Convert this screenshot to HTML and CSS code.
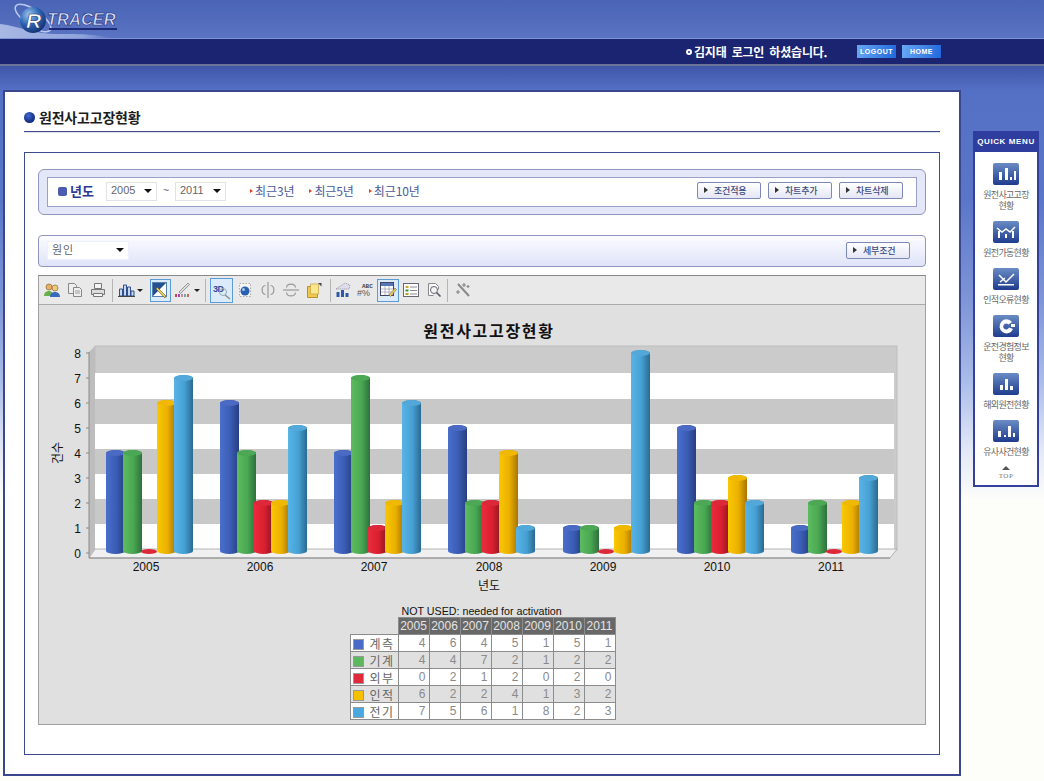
FILE: index.html
```html
<!DOCTYPE html>
<html lang="ko">
<head>
<meta charset="utf-8">
<title>원전사고고장현황</title>
<link rel="stylesheet" href="styles.css">
</head>
<body>
<header class="top">
  <div class="logo-row">
    <svg class="logo" width="130" height="38" viewBox="0 0 130 38">
      <defs>
        <radialGradient id="ball" cx="35%" cy="30%" r="75%"><stop offset="0" stop-color="#9cc6f0"/><stop offset=".55" stop-color="#2a62b0"/><stop offset="1" stop-color="#12306f"/></radialGradient>
        <linearGradient id="haze" x1="0" y1="0" x2="1" y2="0"><stop offset="0" stop-color="#a8b8e4"/><stop offset=".75" stop-color="#8fa4dc"/><stop offset="1" stop-color="#5a73c2"/></linearGradient>
      </defs>
      <path d="M0 24C20 26 30 34 60 34S100 35 110 38H0z" fill="url(#haze)"/>
      <ellipse cx="33" cy="18" rx="21" ry="8" fill="none" stroke="#b8c8ee" stroke-width="1.600" transform="rotate(35 33 18)"/>
      <circle cx="33" cy="20" r="13" fill="url(#ball)"/>
      <text class="logo-r" x="26" y="28">R</text>
      <text class="logo-t" x="47" y="25">TRACER</text>
      <rect x="49" y="28" width="68" height="2" fill="#1c2a78"/>
    </svg>
  </div>
  <div class="nav-row">
    <span class="dot"></span>
    <span class="user">김지태 로그인 하셨습니다.</span>
    <a class="nav-btn">LOGOUT</a>
    <a class="nav-btn">HOME</a>
  </div>
  <div class="nav-shadow"></div>
</header>

<div class="stage">
  <main class="panel">
    <h1 class="title"><span class="title-dot"></span>원전사고고장현황</h1>
    <section class="box">
      <div class="filter">
        <div class="filter-in">
          <span class="sq"></span>
          <strong class="year-label">년도</strong>
          <span class="sel sel-y">2005<i class="tri"></i></span>
          <span class="tilde">~</span>
          <span class="sel sel-y">2011<i class="tri"></i></span>
          <a class="lnk lnk-first">최근3년</a>
          <a class="lnk">최근5년</a>
          <a class="lnk">최근10년</a>
          <span class="btns">
            <a class="btn">조건적용</a>
            <a class="btn">차트추가</a>
            <a class="btn">차트삭제</a>
          </span>
        </div>
      </div>

      <div class="bar2">
        <span class="sel sel-w">원인<i class="tri"></i></span>
        <a class="btn btn-end">세부조건</a>
      </div>

      <div class="chart-panel">
        <div class="toolbar">
          <span class="tb tb-first"><svg width="18" height="16" viewBox="0 0 18 16"><circle cx="6" cy="5" r="3" fill="#e8b060" stroke="#8a6a30" stroke-width=".7"/><circle cx="12" cy="6" r="3" fill="#f0c878" stroke="#8a6a30" stroke-width=".7"/><path d="M1 14c0-4 3-5 5-5s4 1 4 5z" fill="#6ab04a"/><path d="M7 15c0-4 3-5 5-5s5 1 5 5z" fill="#3a6ac0"/></svg></span>
          <span class="tb"><svg width="16" height="16" viewBox="0 0 16 16" fill="#eee" stroke="#888"><path d="M1.500 1.500h6l2 2v8h-8z"/><path d="M6.500 5.500h6l2 2v7h-8z"/><path d="M8 9h5M8 11h5" stroke-width=".8"/></svg></span>
          <span class="tb"><svg width="16" height="16" viewBox="0 0 16 16" fill="#ddd" stroke="#777"><path d="M4.500 1.500h7v5h-7z" fill="#f4f4f4"/><path d="M1.500 7.500h13v5h-13z"/><path d="M3.500 11.500h9v3h-9z" fill="#f4f4f4"/></svg></span>
          <span class="sep sep-a"></span>
          <span class="tb tb-bars"><svg width="17" height="16" viewBox="0 0 17 16" fill="#c9d8ee" stroke="#2f4f8f"><path d="M1.500 14V7h3v7zM5.500 14V3h3v11zM9.500 14V5h3v9zM13 14V9h3v5z"/><path d="M0 14.500h17" stroke="#444"/></svg></span>
          <i class="drop"></i>
          <span class="tb tb-on tb-pointer"><svg width="17" height="17" viewBox="0 0 17 17"><rect x=".5" y=".5" width="14" height="14" fill="#fff" stroke="#5580b0"/><path d="M1 1h13L7 8 1 14z" fill="#24508f"/><path d="M5 5l9 9-1 2-9-9z" fill="#f0d050" stroke="#333" stroke-width=".5"/></svg></span>
          <span class="tb"><svg width="17" height="16" viewBox="0 0 17 16"><path d="M5 10L14 1l1.500 1.500-9 9z" fill="#ddd" stroke="#777" stroke-width=".7"/><path d="M1 12h2v3H1z" fill="#d44"/><path d="M4 12h2v3H4z" fill="#a4c"/><path d="M7 12h2v3H7z" fill="#c8a"/><path d="M10 12h2v3h-2z" fill="#7a9"/><path d="M13 12h2v3h-2z" fill="#c66"/></svg></span>
          <i class="drop"></i>
          <span class="sep sep-b"></span>
          <span class="tb tb-on tb-3d"><svg width="20" height="19" viewBox="0 0 20 19"><text class="ic-3d" x="1" y="11">3D</text><circle cx="11" cy="11" r="3.500" fill="none" stroke="#9aa"/><path d="M13 14l5 4" stroke="#889" stroke-width="1.500"/></svg></span>
          <span class="tb"><svg width="16" height="16" viewBox="0 0 16 16"><rect x="2.500" y="1.500" width="11" height="13" fill="#f4f4f4" stroke="#aaa" stroke-dasharray="1.500 1.500"/><circle cx="8" cy="9" r="4.500" fill="#2a60b0"/><circle cx="6.500" cy="7.500" r="1.500" fill="#a8c8ee"/></svg></span>
          <span class="tb"><svg width="16" height="16" viewBox="0 0 16 16" fill="none" stroke="#999" stroke-width="1.200"><path d="M8 0v16"/><path d="M5.500 3.500C1 4 1 12 5.500 12.500M10.500 3.500c4.500.5 4.500 8.500 0 9"/></svg></span>
          <span class="tb"><svg width="16" height="16" viewBox="0 0 16 16" fill="none" stroke="#999" stroke-width="1.200"><path d="M0 8h16"/><path d="M3.500 5.500C4 1 12 1 12.500 5.500M3.500 10.500c.5 4.500 8.500 4.500 9 0"/></svg></span>
          <span class="tb"><svg width="16" height="16" viewBox="0 0 16 16"><path d="M1.500 4.500h10v11h-10z" fill="#f2c84a" stroke="#b89030"/><path d="M4.500 2h8v10h-8z" fill="#fbe68c" stroke="#c0a040" stroke-width=".7"/><path d="M12 1l3.500 0v3.500z" fill="#445"/></svg></span>
          <span class="sep sep-c"></span>
          <span class="tb"><svg width="16" height="16" viewBox="0 0 16 16"><path d="M1 7L10 1l5 2-1 4H2z" fill="#dde" stroke="#778" stroke-width=".7" stroke-dasharray="1 1"/><path d="M1.500 10h3v5h-3z" fill="#2a5aa8"/><path d="M6 8h3v7H6z" fill="#2a5aa8"/><path d="M10.500 11h3v4h-3z" fill="#2a5aa8"/></svg></span>
          <span class="tb"><svg width="17" height="16" viewBox="0 0 17 16"><text class="ic-abc" x="5" y="6">ABC</text><text class="ic-hash" x="0" y="14">#%</text></svg></span>
          <span class="tb tb-on tb-table"><svg width="17" height="16" viewBox="0 0 17 16"><rect x=".5" y=".5" width="13" height="13" fill="#fff" stroke="#446"/><path d="M1 1h12v3H1z" fill="#5577b8"/><path d="M1 7h12M1 10h12M5 4v9M9 4v9" stroke="#99a" stroke-width=".7"/><path d="M9 13l6-7 1.500 1.500-6 7z" fill="#f0d050" stroke="#555" stroke-width=".5"/></svg></span>
          <span class="tb"><svg width="16" height="16" viewBox="0 0 16 16"><rect x=".5" y="1.500" width="15" height="13" fill="#fff" stroke="#667"/><path d="M2.500 4h3v2h-3z" fill="#d4a420"/><path d="M2.500 7.500h3v2h-3z" fill="#3a8a3a"/><path d="M2.500 11h3v2h-3z" fill="#b8a020"/><path d="M7 5h7M7 8.500h7M7 12h7" stroke="#889"/></svg></span>
          <span class="tb"><svg width="16" height="16" viewBox="0 0 16 16"><path d="M2.500 1.500h7l3 3v3M2.500 1.500v12h5" fill="#fff" stroke="#888"/><circle cx="8" cy="8" r="3.500" fill="#f4f4f4" stroke="#667"/><path d="M10.500 10.500l4 4" stroke="#556" stroke-width="1.600"/></svg></span>
          <span class="sep sep-d"></span>
          <span class="tb"><svg width="16" height="16" viewBox="0 0 16 16" stroke="#888" stroke-width="1.200" fill="none"><path d="M3 2l11 12" stroke-width="2"/><path d="M9 1v4M7 3h4M3 8v4M1 10h4M13 3v3M11.500 4.500h3"/></svg></span>
        </div>

        <svg class="plot" width="886" height="300" viewBox="39 305 886 300">
          <defs>
            <linearGradient id="gb"><stop offset="0" stop-color="#4a6fcc"/><stop offset=".55" stop-color="#3b5cb4"/><stop offset="1" stop-color="#263f80"/></linearGradient>
            <linearGradient id="gg"><stop offset="0" stop-color="#5dbb5f"/><stop offset=".55" stop-color="#4aa852"/><stop offset="1" stop-color="#2d703c"/></linearGradient>
            <linearGradient id="gr"><stop offset="0" stop-color="#ec2a3e"/><stop offset=".55" stop-color="#d8202f"/><stop offset="1" stop-color="#8b1522"/></linearGradient>
            <linearGradient id="gy"><stop offset="0" stop-color="#fac800"/><stop offset=".55" stop-color="#eab000"/><stop offset="1" stop-color="#a87400"/></linearGradient>
            <linearGradient id="gl"><stop offset="0" stop-color="#58b4e6"/><stop offset=".55" stop-color="#46a0d4"/><stop offset="1" stop-color="#2a6a90"/></linearGradient>
          </defs>
          <text class="c-title" x="489" y="337">원전사고고장현황</text>

          <rect class="wall" x="95" y="346" width="802" height="204"/>
          <rect class="w-white" x="95" y="373" width="799" height="176"/>
          <rect class="w-grey" x="95" y="399" width="799" height="25"/>
          <rect class="w-grey" x="95" y="449" width="799" height="25"/>
          <rect class="w-grey" x="95" y="499" width="799" height="25"/>
          <path class="side" d="M89 352l6-6v203l-6 8z"/>
          <path class="floor" d="M95 549H897l-7 9H89z"/>
          <path class="axis" d="M89 352V558H890M86 353h3M86 378h3M86 403h3M86 428h3M86 453h3M86 478h3M86 503h3M86 528h3M86 553h3"/>

          <g class="ticks">
            <text x="81" y="358">8</text><text x="81" y="383">7</text><text x="81" y="408">6</text>
            <text x="81" y="433">5</text><text x="81" y="458">4</text><text x="81" y="483">3</text>
            <text x="81" y="508">2</text><text x="81" y="533">1</text><text x="81" y="558">0</text>
          </g>

          <g fill="url(#gb)">
            <path d="M106 551V453a9.500 3 0 0 1 19 0V551a9.500 3 0 0 1-19 0z"/>
            <path d="M220 551V403a9.500 3 0 0 1 19 0V551a9.500 3 0 0 1-19 0z"/>
            <path d="M334 551V453a9.500 3 0 0 1 19 0V551a9.500 3 0 0 1-19 0z"/>
            <path d="M448 551V428a9.500 3 0 0 1 19 0V551a9.500 3 0 0 1-19 0z"/>
            <path d="M563 551V528a9.500 3 0 0 1 19 0V551a9.500 3 0 0 1-19 0z"/>
            <path d="M677 551V428a9.500 3 0 0 1 19 0V551a9.500 3 0 0 1-19 0z"/>
            <path d="M791 551V528a9.500 3 0 0 1 19 0V551a9.500 3 0 0 1-19 0z"/>
          </g>
          <g class="cap-b">
            <ellipse cx="115.500" cy="453" rx="9.500" ry="3"/><ellipse cx="229.500" cy="403" rx="9.500" ry="3"/><ellipse cx="343.500" cy="453" rx="9.500" ry="3"/><ellipse cx="457.500" cy="428" rx="9.500" ry="3"/><ellipse cx="572.500" cy="528" rx="9.500" ry="3"/><ellipse cx="686.500" cy="428" rx="9.500" ry="3"/><ellipse cx="800.500" cy="528" rx="9.500" ry="3"/>
          </g>
          <g fill="url(#gg)">
            <path d="M123 551V453a9.500 3 0 0 1 19 0V551a9.500 3 0 0 1-19 0z"/>
            <path d="M237 551V453a9.500 3 0 0 1 19 0V551a9.500 3 0 0 1-19 0z"/>
            <path d="M351 551V378a9.500 3 0 0 1 19 0V551a9.500 3 0 0 1-19 0z"/>
            <path d="M465 551V503a9.500 3 0 0 1 19 0V551a9.500 3 0 0 1-19 0z"/>
            <path d="M580 551V528a9.500 3 0 0 1 19 0V551a9.500 3 0 0 1-19 0z"/>
            <path d="M694 551V503a9.500 3 0 0 1 19 0V551a9.500 3 0 0 1-19 0z"/>
            <path d="M808 551V503a9.500 3 0 0 1 19 0V551a9.500 3 0 0 1-19 0z"/>
          </g>
          <g class="cap-g">
            <ellipse cx="132.500" cy="453" rx="9.500" ry="3"/><ellipse cx="246.500" cy="453" rx="9.500" ry="3"/><ellipse cx="360.500" cy="378" rx="9.500" ry="3"/><ellipse cx="474.500" cy="503" rx="9.500" ry="3"/><ellipse cx="589.500" cy="528" rx="9.500" ry="3"/><ellipse cx="703.500" cy="503" rx="9.500" ry="3"/><ellipse cx="817.500" cy="503" rx="9.500" ry="3"/>
          </g>
          <g fill="url(#gr)">
            <path d="M254 551V503a9.500 3 0 0 1 19 0V551a9.500 3 0 0 1-19 0z"/>
            <path d="M368 551V528a9.500 3 0 0 1 19 0V551a9.500 3 0 0 1-19 0z"/>
            <path d="M482 551V503a9.500 3 0 0 1 19 0V551a9.500 3 0 0 1-19 0z"/>
            <path d="M711 551V503a9.500 3 0 0 1 19 0V551a9.500 3 0 0 1-19 0z"/>
          </g>
          <g class="cap-r">
            <ellipse cx="263.500" cy="503" rx="9.500" ry="3"/><ellipse cx="377.500" cy="528" rx="9.500" ry="3"/><ellipse cx="491.500" cy="503" rx="9.500" ry="3"/><ellipse cx="720.500" cy="503" rx="9.500" ry="3"/>
            <ellipse cx="149" cy="551.500" rx="8" ry="2.500"/><ellipse cx="606" cy="551.500" rx="8" ry="2.500"/><ellipse cx="834" cy="551.500" rx="8" ry="2.500"/>
          </g>
          <g fill="url(#gy)">
            <path d="M157 551V403a9.500 3 0 0 1 19 0V551a9.500 3 0 0 1-19 0z"/>
            <path d="M271 551V503a9.500 3 0 0 1 19 0V551a9.500 3 0 0 1-19 0z"/>
            <path d="M385 551V503a9.500 3 0 0 1 19 0V551a9.500 3 0 0 1-19 0z"/>
            <path d="M499 551V453a9.500 3 0 0 1 19 0V551a9.500 3 0 0 1-19 0z"/>
            <path d="M614 551V528a9.500 3 0 0 1 19 0V551a9.500 3 0 0 1-19 0z"/>
            <path d="M728 551V478a9.500 3 0 0 1 19 0V551a9.500 3 0 0 1-19 0z"/>
            <path d="M842 551V503a9.500 3 0 0 1 19 0V551a9.500 3 0 0 1-19 0z"/>
          </g>
          <g class="cap-y">
            <ellipse cx="166.500" cy="403" rx="9.500" ry="3"/><ellipse cx="280.500" cy="503" rx="9.500" ry="3"/><ellipse cx="394.500" cy="503" rx="9.500" ry="3"/><ellipse cx="508.500" cy="453" rx="9.500" ry="3"/><ellipse cx="623.500" cy="528" rx="9.500" ry="3"/><ellipse cx="737.500" cy="478" rx="9.500" ry="3"/><ellipse cx="851.500" cy="503" rx="9.500" ry="3"/>
          </g>
          <g fill="url(#gl)">
            <path d="M174 551V378a9.500 3 0 0 1 19 0V551a9.500 3 0 0 1-19 0z"/>
            <path d="M288 551V428a9.500 3 0 0 1 19 0V551a9.500 3 0 0 1-19 0z"/>
            <path d="M402 551V403a9.500 3 0 0 1 19 0V551a9.500 3 0 0 1-19 0z"/>
            <path d="M516 551V528a9.500 3 0 0 1 19 0V551a9.500 3 0 0 1-19 0z"/>
            <path d="M631 551V353a9.500 3 0 0 1 19 0V551a9.500 3 0 0 1-19 0z"/>
            <path d="M745 551V503a9.500 3 0 0 1 19 0V551a9.500 3 0 0 1-19 0z"/>
            <path d="M859 551V478a9.500 3 0 0 1 19 0V551a9.500 3 0 0 1-19 0z"/>
          </g>
          <g class="cap-l">
            <ellipse cx="183.500" cy="378" rx="9.500" ry="3"/><ellipse cx="297.500" cy="428" rx="9.500" ry="3"/><ellipse cx="411.500" cy="403" rx="9.500" ry="3"/><ellipse cx="525.500" cy="528" rx="9.500" ry="3"/><ellipse cx="640.500" cy="353" rx="9.500" ry="3"/><ellipse cx="754.500" cy="503" rx="9.500" ry="3"/><ellipse cx="868.500" cy="478" rx="9.500" ry="3"/>
          </g>

          <g class="xlabels">
            <text x="146" y="571">2005</text><text x="260" y="571">2006</text><text x="374" y="571">2007</text><text x="489" y="571">2008</text><text x="603" y="571">2009</text><text x="717" y="571">2010</text><text x="831" y="571">2011</text>
          </g>
          <text class="ax-x" x="489" y="590">년도</text>
          <text class="ax-y" transform="translate(62 453) rotate(-90)">건수</text>
        </svg>

        <div class="legend">
          <div class="note">NOT USED: needed for activation</div>
          <table class="data">
            <thead><tr><th class="blank"></th><th>2005</th><th>2006</th><th>2007</th><th>2008</th><th>2009</th><th>2010</th><th>2011</th></tr></thead>
            <tbody>
              <tr><td class="name"><i class="sw sw-b"></i>계측</td><td>4</td><td>6</td><td>4</td><td>5</td><td>1</td><td>5</td><td>1</td></tr>
              <tr class="alt"><td class="name"><i class="sw sw-g"></i>기계</td><td>4</td><td>4</td><td>7</td><td>2</td><td>1</td><td>2</td><td>2</td></tr>
              <tr><td class="name"><i class="sw sw-r"></i>외부</td><td>0</td><td>2</td><td>1</td><td>2</td><td>0</td><td>2</td><td>0</td></tr>
              <tr class="alt"><td class="name"><i class="sw sw-y"></i>인적</td><td>6</td><td>2</td><td>2</td><td>4</td><td>1</td><td>3</td><td>2</td></tr>
              <tr><td class="name"><i class="sw sw-l"></i>전기</td><td>7</td><td>5</td><td>6</td><td>1</td><td>8</td><td>2</td><td>3</td></tr>
            </tbody>
          </table>
        </div>
      </div>
    </section>
  </main>

  <aside class="quick">
    <div class="quick-head">QUICK MENU</div>
    <ul class="quick-list">
      <li><svg class="qi" viewBox="0 0 26 22"><path d="M6 9h3v8H6zM12 5h3v12h-3zM17 14h2v3h-2zM21 8h2v9h-2z"/></svg><span>원전사고고장<br>현황</span></li>
      <li><svg class="qi" viewBox="0 0 26 22"><path d="M5 10h2v7H5zM12 13h2v4h-2zM19 10h2v7h-2z"/><path d="M4 7l5 4 4-3 4 3 5-5" fill="none" stroke="#fff" stroke-width="1.500"/></svg><span>원전가동현황</span></li>
      <li><svg class="qi" viewBox="0 0 26 22"><path d="M5 16h16v1.500H5z"/><path d="M6 7l7 7 8-8M7 14l5-4" fill="none" stroke="#fff" stroke-width="1.500"/></svg><span>인적오류현황</span></li>
      <li><svg class="qi" viewBox="0 0 26 22"><path d="M19 7a7 7 0 1 0 1 7l-4-1.500a3 3 0 1 1-.5-3z"/><path d="M18 9h4v3h-4z"/></svg><span>운전경험정보<br>현황</span></li>
      <li><svg class="qi" viewBox="0 0 26 22"><path d="M7 12h3v5H7zM12 6h3v11h-3zM17 13h3v4h-3z"/></svg><span>해외원전현황</span></li>
      <li><svg class="qi" viewBox="0 0 26 22"><path d="M5 11h3v6H5zM11 15h2v2h-2zM15 6h3v11h-3zM20 13h2v4h-2z"/></svg><span>유사사건현황</span></li>
    </ul>
    <div class="quick-top"><i class="up"></i><span>TOP</span></div>
  </aside>
</div>
</body>
</html>
```
FILE: styles.css
```css
* { box-sizing: border-box; }
html, body { margin: 0; padding: 0; }
body {
  width: 1044px;
  height: 781px;
  overflow: hidden;
  font-family: "Liberation Sans", "Noto Sans CJK KR", sans-serif;
  background: linear-gradient(#3f56a8 66px, #5470c4 90px, #5a76c8 200px, #7e95d6 300px, #a9bbe8 380px, #e2e8f6 450px, #fdfdfa 500px);
}
a { text-decoration: none; }
i { font-style: normal; }

/* header */
.top { height: 66px; background: linear-gradient(#4a64b6, #5a73c2 38px); }
.logo-row { height: 38px; }
.logo { display: block; }
.logo-r { font: italic bold 21px "Liberation Sans", sans-serif; fill: #fff; stroke: #16306f; stroke-width: .6px; }
.logo-t { font: italic bold 16.500px "Liberation Sans", sans-serif; fill: #dbe6fb; stroke: #1c2a78; stroke-width: .6px; }
.nav-row {
  height: 26px;
  display: flex;
  align-items: center;
  padding-left: 686px;
  background: #1b2470;
  border-top: 1px solid #7f93d8;
}
.dot { width: 6px; height: 6px; border-radius: 50%; border: 2px solid #fff; background: #1b2470; margin-right: 2px; }
.user { width: 157px; color: #fff; font: bold 12px "Noto Sans CJK KR", sans-serif; letter-spacing: -.2px; word-spacing: 2px; white-space: nowrap; }
.nav-btn {
  width: 39px;
  height: 13px;
  margin-left: 6px;
  color: #fff;
  font: bold 7px/13px "Liberation Sans", sans-serif;
  letter-spacing: .5px;
  text-align: center;
  background: linear-gradient(100deg, #68a8f4, #2268dc);
}
.nav-shadow { height: 2px; background: #6b7398; }

/* main */
.stage { display: flex; align-items: flex-start; padding: 24px 0 0 3px; }
.panel {
  width: 958px;
  height: 686px;
  background: #fff;
  border: 2px solid #3a478f;
  padding: 13px 19px 0 19px;
}
.title {
  display: flex;
  align-items: center;
  height: 27px;
  margin: 0 0 20px;
  padding-bottom: 2px;
  border-bottom: 1px solid #3d4a90;
  color: #1c1c1c;
  font: bold 14px "Noto Sans CJK KR", sans-serif;
  letter-spacing: -.2px;
  box-shadow: 0 1px 0 #e0e2ee;
}
.title-dot { width: 11px; height: 11px; margin-right: 4px; border-radius: 50%; background: radial-gradient(circle at 40% 35%, #3f6ad0, #10287c 70%); }
.box { height: 603px; border: 1px solid #3d4a90; padding: 16px 13px 0; }

.filter {
  height: 46px;
  padding: 7px 8px;
  background: #e4e7f8;
  border: 1px solid #9096bf;
  border-radius: 6px;
}
.filter-in {
  height: 30px;
  display: flex;
  align-items: center;
  padding: 0 13px 2px 10px;
  background: #fff;
  border: 1px solid #9aa0c8;
}
.sq { width: 9px; height: 9px; margin-right: 3px; border-radius: 2px; background: #4b5bb0; }
.year-label { width: 36px; padding-bottom: 2px; color: #2b3a8f; font: bold 13px "Noto Sans CJK KR", sans-serif; }
.sel {
  display: flex;
  align-items: center;
  justify-content: space-between;
  height: 19px;
  padding-bottom: 2px;
  color: #666;
  font-size: 11px;
  background: #fff;
  border: 1px solid #e2e2e2;
}
.sel-y { width: 51px; padding-left: 4px; padding-right: 3px; }
.sel-w { width: 82px; padding-left: 4px; padding-right: 3px; font-family: "Noto Sans CJK KR", sans-serif; letter-spacing: 1px; border-color: #eef0fa; }
.tri { width: 0; height: 0; margin-top: 2px; margin-right: 1px; border: 4px solid transparent; border-top: 4px solid #111; border-bottom: 0; }
.tilde { width: 18px; padding-bottom: 2px; text-align: center; color: #666; font-size: 11px; }
.lnk {
  position: relative;
  margin-left: 20px;
  padding-bottom: 2px;
  color: #4a5a98;
  font: 12px "Noto Sans CJK KR", sans-serif;
  letter-spacing: -.1px;
}
.lnk-first { margin-left: 29px; }
.lnk::before {
  content: "";
  position: absolute;
  left: -5px;
  top: 7px;
  border: 2px solid transparent;
  border-left: 3px solid #e04020;
  border-right: 0;
}
.btns { margin-left: auto; margin-bottom: 2px; display: flex; gap: 7px; }
.btn {
  position: relative;
  display: block;
  width: 64px;
  height: 17px;
  padding-left: 16px;
  color: #3b4a80;
  font: 500 9px/16px "Noto Sans CJK KR", sans-serif;
  letter-spacing: -.2px;
  background: linear-gradient(#fff, #e4e6f4);
  border: 1px solid #7d89b5;
  border-radius: 2px;
}
.btn::before {
  content: "";
  position: absolute;
  left: 6px;
  top: 4px;
  border: 3px solid transparent;
  border-left: 4px solid #333;
  border-right: 0;
}

.bar2 {
  display: flex;
  align-items: center;
  justify-content: space-between;
  height: 32px;
  margin-top: 20px;
  padding: 0 15px 2px 8px;
  background: linear-gradient(#fcfcff, #dfe3f8);
  border: 1px solid #9096bf;
  border-radius: 4px;
}

.chart-panel {
  height: 450px;
  margin-top: 8px;
  background: #e0e0e0;
  border: 1px solid #a0a0a0;
  border-top-color: #8a8a8a;
}
.toolbar {
  display: flex;
  align-items: center;
  height: 29px;
  background: #e9e9e9;
  border-bottom: 1px solid #aaa;
}
.tb { display: flex; align-items: center; justify-content: center; width: 23px; height: 23px; flex: none; }
.tb-first { margin-left: 1px; }
.tb-bars { width: 22px; }
.tb-on { background: #dcebfa; border: 1px solid #5b9bd8; }
.tb-pointer { width: 21px; margin-left: 7px; }
.tb-3d { width: 23px; height: 25px; }
.tb-table { width: 22px; }
.sep { flex: none; width: 1px; height: 23px; background: #b4b4b4; }
.sep-a { margin: 0 2px 0 3px; }
.sep-b { margin: 0 4px 0 5px; }
.sep-c { margin: 0 0 0 5px; }
.sep-d { margin: 0 3px 0 2px; }
.drop { flex: none; width: 6px; height: 0; border: 3px solid transparent; border-top: 3px solid #222; border-bottom: 0; }
.ic-3d { font: bold 9px "Liberation Sans", sans-serif; fill: #2a4aa0; letter-spacing: -.5px; }
.ic-abc { font: bold 6px "Liberation Mono", monospace; fill: #444; }
.ic-hash { font: 9px "Liberation Sans", sans-serif; fill: #555; }

.plot { display: block; }
.c-title { font: bold 16px "Noto Sans CJK KR", sans-serif; letter-spacing: 1.700px; text-anchor: middle; fill: #111; }
.wall { fill: #cbcbcb; stroke: #bdbdbd; }
.w-white { fill: #fff; }
.w-grey { fill: #c8c8c8; }
.side { fill: #bdbdbd; }
.floor { fill: #f0f0f0; stroke: #b4b4b4; }
.axis { fill: none; stroke: #8a8a8a; }
.ticks text { font: 12px "Liberation Sans", sans-serif; text-anchor: end; fill: #111; }
.xlabels text { font: 12px "Liberation Sans", sans-serif; text-anchor: middle; fill: #111; }
.ax-x { font: 12px "Noto Sans CJK KR", sans-serif; text-anchor: middle; fill: #111; }
.ax-y { font: 12px "Noto Sans CJK KR", sans-serif; text-anchor: middle; fill: #111; }
.cap-b { fill: #4a6ac4; }
.cap-g { fill: #4ca854; }
.cap-r { fill: #dc2838; }
.cap-y { fill: #f0b800; }
.cap-l { fill: #52a8d8; }

.legend { width: 265px; margin: 0 auto; }
.note { height: 12px; padding-left: 52px; color: #111; font-size: 10.700px; line-height: 12px; white-space: nowrap; }
.data { width: 265px; border-collapse: collapse; table-layout: fixed; font-size: 12px; }
.data th, .data td { height: 17px; padding: 0 3px; border: 1px solid #8c8c8c; line-height: 15px; }
.data th { width: 31px; background: #686868; color: #e4e4e4; font-weight: 400; text-align: center; padding: 0; }
.data th.blank { width: 48px; background: transparent; border: 0; border-bottom: 1px solid #8c8c8c; }
.data td { background: #fff; color: #8a8a8a; text-align: right; }
.data .alt td { background: #e0e0e0; }
.data td.name { padding: 0 0 0 2px; background: #fff; color: #666; text-align: left; white-space: nowrap; font-family: "Noto Sans CJK KR", sans-serif; letter-spacing: 1.500px; }
.data .alt td.name { background: #e0e0e0; }
.sw { display: inline-block; width: 11px; height: 11px; margin-right: 6px; vertical-align: -1px; border: 1px solid #999; }
.sw-b { background: #4a6cc8; }
.sw-g { background: #5cb85c; }
.sw-r { background: #e02a3c; }
.sw-y { background: #f4c000; }
.sw-l { background: #4aa8e0; }

/* quick menu */
.quick {
  width: 66px;
  height: 356px;
  margin: 41px 0 0 12px;
  background: #fff;
  border: 2px solid #33419a;
  border-top: 0;
}
.quick-head {
  height: 21px;
  margin: 0 -2px;
  color: #fff;
  font: bold 8px/21px "Liberation Sans", sans-serif;
  letter-spacing: .6px;
  text-align: center;
  background: #2f3e9e;
}
.quick-list {
  list-style: none;
  margin: 0;
  padding: 11px 0 0;
}
.quick-list li { display: flex; flex-direction: column; align-items: center; padding-bottom: 10px; }
.quick-list span {
  margin-top: 4px;
  color: #666;
  font: 9px/11px "Noto Sans CJK KR", sans-serif;
  letter-spacing: -.7px;
  text-align: center;
  white-space: nowrap;
}
.qi { width: 26px; height: 22px; fill: #fff; border-radius: 2px; background: linear-gradient(#6a8cc4, #1f3c8e); }
.quick-top { display: flex; flex-direction: column; align-items: center; margin-top: -1px; color: #777; font: 7px/9px "Liberation Serif", serif; letter-spacing: .5px; }
.up { width: 0; height: 0; margin-bottom: 2px; border: 4px solid transparent; border-bottom: 4px solid #555; border-top: 0; }
```
